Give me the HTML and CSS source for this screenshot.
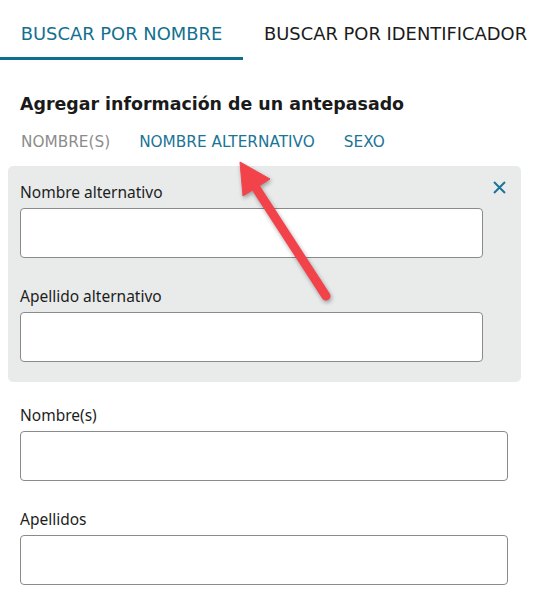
FILE: index.html
```html
<!DOCTYPE html>
<html lang="es">
<head>
<meta charset="utf-8">
<title>Buscar por nombre</title>
<link rel="stylesheet" href="styles.css">
</head>
<body>
<div class="page">
  <nav class="tabs">
    <div class="tab tab-active">BUSCAR POR NOMBRE</div>
    <div class="tab">BUSCAR POR IDENTIFICADOR</div>
  </nav>
  <div class="content">
    <h2 class="heading">Agregar información de un antepasado</h2>
    <div class="subtabs">
      <span class="subtab subtab-muted">NOMBRE(S)</span>
      <span class="subtab">NOMBRE ALTERNATIVO</span>
      <span class="subtab">SEXO</span>
    </div>
    <div class="panel">
      <div class="panel-fields">
        <div class="field">
          <label class="label">Nombre alternativo</label>
          <div class="input input-panel"></div>
        </div>
        <div class="field field-next">
          <label class="label">Apellido alternativo</label>
          <div class="input input-panel"></div>
        </div>
      </div>
      <div class="close">
        <svg width="13" height="13" viewBox="0 0 13 13"><path d="M1 1 L12 12 M12 1 L1 12" stroke="#1a7596" stroke-width="2" fill="none"/></svg>
      </div>
    </div>
    <div class="fields">
      <div class="field">
        <label class="label">Nombre(s)</label>
        <div class="input"></div>
      </div>
      <div class="field field-next">
        <label class="label">Apellidos</label>
        <div class="input"></div>
      </div>
    </div>
  </div>
  <svg class="arrow" width="547" height="603" viewBox="0 0 547 603">
    <g fill="#f2434b" stroke="#f2434b">
      <line x1="254" y1="185" x2="326" y2="296" stroke-width="9" stroke-linecap="round"/>
      <polygon points="240,162 243,196 270,179" stroke-width="1" stroke-linejoin="round"/>
    </g>
  </svg>
</div>
</body>
</html>
```
FILE: styles.css
```css
html, body {
  margin: 0;
  padding: 0;
  background: #ffffff;
}
.page {
  position: relative;
  width: 547px;
  height: 603px;
  overflow: hidden;
  font-family: "DejaVu Sans", Verdana, sans-serif;
  color: #1d1d1d;
}
.tabs {
  display: flex;
  height: 60px;
}
.tab {
  box-sizing: border-box;
  height: 60px;
  padding-top: 24px;
  font-size: 17.9px;
  line-height: 20px;
  white-space: nowrap;
  color: #1b1b1b;
  padding-left: 21px;
}
.tab-active {
  width: 243px;
  padding-left: 0;
  text-align: center;
  color: #13708f;
  border-bottom: 3px solid #0f6e8e;
}
.content {
  padding: 0 8px;
}
.heading {
  margin: 33px 0 0 12px;
  font-size: 17.4px;
  line-height: 22px;
  font-weight: bold;
  color: #1a1a1a;
}
.subtabs {
  display: flex;
  gap: 29px;
  margin: 18px 0 0 13px;
  font-size: 15.3px;
  line-height: 18px;
}
.subtab {
  color: #1a7596;
  white-space: nowrap;
}
.subtab-muted {
  color: #8c8c8c;
}
.panel {
  display: flex;
  gap: 10px;
  width: 513px;
  box-sizing: border-box;
  margin-top: 15px;
  padding: 16px 15px 20px 12px;
  background: #e9ebeb;
  border-radius: 5px;
}
.panel-fields {
  width: 463px;
}
.close {
  width: 13px;
  height: 13px;
  margin-top: -1px;
  line-height: 0;
}
.field {
  display: flex;
  flex-direction: column;
}
.field-next {
  margin-top: 28px;
}
.label {
  font-family: "Noto Sans", "Open Sans", sans-serif;
  font-size: 15.5px;
  line-height: 20px;
  color: #1d1d1d;
  margin-bottom: 6px;
}
.input {
  box-sizing: border-box;
  height: 50px;
  background: #ffffff;
  border: 1px solid #8a8a8a;
  border-radius: 4px;
}
.fields {
  padding-left: 12px;
  margin-top: 23px;
  width: 488px;
}
.arrow {
  position: absolute;
  left: 0;
  top: 0;
  pointer-events: none;
  filter: drop-shadow(1px 2px 2px rgba(0, 0, 0, 0.35));
}
```
